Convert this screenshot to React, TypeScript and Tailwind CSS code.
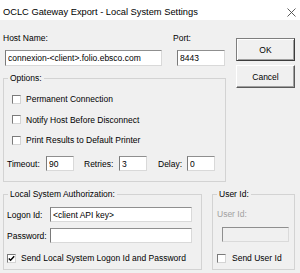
import type { ReactNode } from 'react';

const fieldCls =
  'block bg-white px-[2px] text-[8.5px] leading-[10px] text-black outline-none border border-t-[#8f8f8f] border-l-[#7a7a7a] border-r-[#d9d9d9] border-b-[#d9d9d9]';

function Field({ value, className }: { value?: string; className: string }) {
  return <input readOnly value={value ?? ''} className={`${fieldCls} ${className}`} />;
}

function Check({ checked = false }: { checked?: boolean }) {
  return (
    <span className="flex h-[9px] w-[9px] shrink-0 items-center justify-center border border-t-[#7a7a7a] border-l-[#7a7a7a] border-r-[#d4d4d4] border-b-[#d4d4d4] bg-white">
      {checked && (
        <svg width="7" height="7" viewBox="0 0 7 7">
          <path d="M0.8 3.4 L2.6 5.2 L6.2 1.2" fill="none" stroke="#000" strokeWidth="1.4" />
        </svg>
      )}
    </span>
  );
}

function CheckRow({ label, checked, className }: { label: string; checked?: boolean; className: string }) {
  return (
    <div className={`flex items-center ${className}`}>
      <Check checked={checked} />
      <span className="ml-[5px] whitespace-nowrap">{label}</span>
    </div>
  );
}

function Group({ title, className, children }: { title: string; className: string; children: ReactNode }) {
  return (
    <fieldset className={`border border-[#d3d3d3] ${className}`}>
      <legend className="ml-[4px] px-[2px] leading-[10px]">{title}</legend>
      {children}
    </fieldset>
  );
}

export default function App() {
  return (
    <div className="h-[273px] w-[300px] overflow-hidden bg-[#f0f0f0] font-['Liberation_Sans',Arial,sans-serif] text-[8.5px] leading-[10px] text-black">
      <div className="flex h-[20px] items-center justify-between bg-white pl-[3px] pr-[4px] pt-[4px]">
        <span className="whitespace-nowrap text-[9.3px]">OCLC Gateway Export - Local System Settings</span>
        <svg width="9" height="9" viewBox="0 0 9 9">
          <path d="M0.5 0.5 L8.5 8.5 M8.5 0.5 L0.5 8.5" stroke="#4a4a4a" strokeWidth="0.9" />
        </svg>
      </div>

      <div className="flex pl-[3px]">
        <div className="w-[223px]">
          <div className="mt-[13px] flex">
            <div className="w-[170px]">
              <div>Host Name:</div>
              <Field value="connexion-<client>.folio.ebsco.com" className="ml-[2px] mt-[7px] h-[16px] w-[157px]" />
            </div>
            <div>
              <div>Port:</div>
              <Field value="8443" className="ml-[4px] mt-[7px] h-[16px] w-[48px]" />
            </div>
          </div>

          <Group title="Options:" className="mt-[7px] h-[109px] w-[223px]">
            <div className="pl-[8px] pt-[6px]">
              <CheckRow label="Permanent Connection" className="h-[20px]" />
              <CheckRow label="Notify Host Before Disconnect" className="h-[21px]" />
              <CheckRow label="Print Results to Default Printer" className="h-[20px]" />
            </div>
            <div className="mt-[6px] flex h-[15px] items-center pl-[3px]">
              <span className="w-[39px]">Timeout:</span>
              <Field value="90" className="h-[15px] w-[28px]" />
              <span className="ml-[10px] w-[35px]">Retries:</span>
              <Field value="3" className="h-[15px] w-[28px]" />
              <span className="ml-[11px] w-[29px]">Delay:</span>
              <Field value="0" className="h-[15px] w-[28px]" />
            </div>
          </Group>
        </div>

        <div className="ml-[10px] mt-[18px] flex w-[59px] flex-col gap-[4px]">
          <button
            type="button"
            className="h-[23px] border border-[#7e7e7e] border-b-[#3c3c3c] border-r-[#3c3c3c] bg-[#f0f0f0] shadow-[inset_1px_1px_0_#fff,inset_-1px_-1px_0_#a0a0a0]"
          >
            OK
          </button>
          <button
            type="button"
            className="h-[23px] border border-t-[#fff] border-l-[#fff] border-r-[#5a5a5a] border-b-[#5a5a5a] bg-[#f0f0f0] shadow-[inset_-1px_-1px_0_#a0a0a0]"
          >
            Cancel
          </button>
        </div>
      </div>

      <div className="mt-[7px] flex pl-[3px]">
        <Group title="Local System Authorization:" className="h-[81px] w-[199px]">
          <div className="pl-[3px]">
            <div className="mt-[8px] flex h-[15px] items-center">
              <span className="w-[43px]">Logon Id:</span>
              <Field value="<client API key>" className="h-[15px] w-[142px]" />
            </div>
            <div className="mt-[6px] flex h-[15px] items-center">
              <span className="w-[43px]">Password:</span>
              <Field className="h-[15px] w-[142px]" />
            </div>
            <CheckRow label="Send Local System Logon Id and Password" checked className="mt-[9px] h-[12px]" />
          </div>
        </Group>

        <Group title="User Id:" className="ml-[10px] h-[81px] w-[83px]">
          <div className="pl-[4px]">
            <div className="mt-[10px] text-[#a0a0a0]">User Id:</div>
            <input
              readOnly
              disabled
              className="ml-[5px] mt-[8px] block h-[15px] w-[67px] border border-t-[#8f8f8f] border-l-[#8f8f8f] border-r-[#dadada] border-b-[#dadada] bg-[#f0f0f0]"
            />
            <div className="mt-[10px] flex h-[12px] items-center">
              <Check />
              <span className="ml-[6px] whitespace-nowrap">Send User Id</span>
            </div>
          </div>
        </Group>
      </div>
    </div>
  );
}
